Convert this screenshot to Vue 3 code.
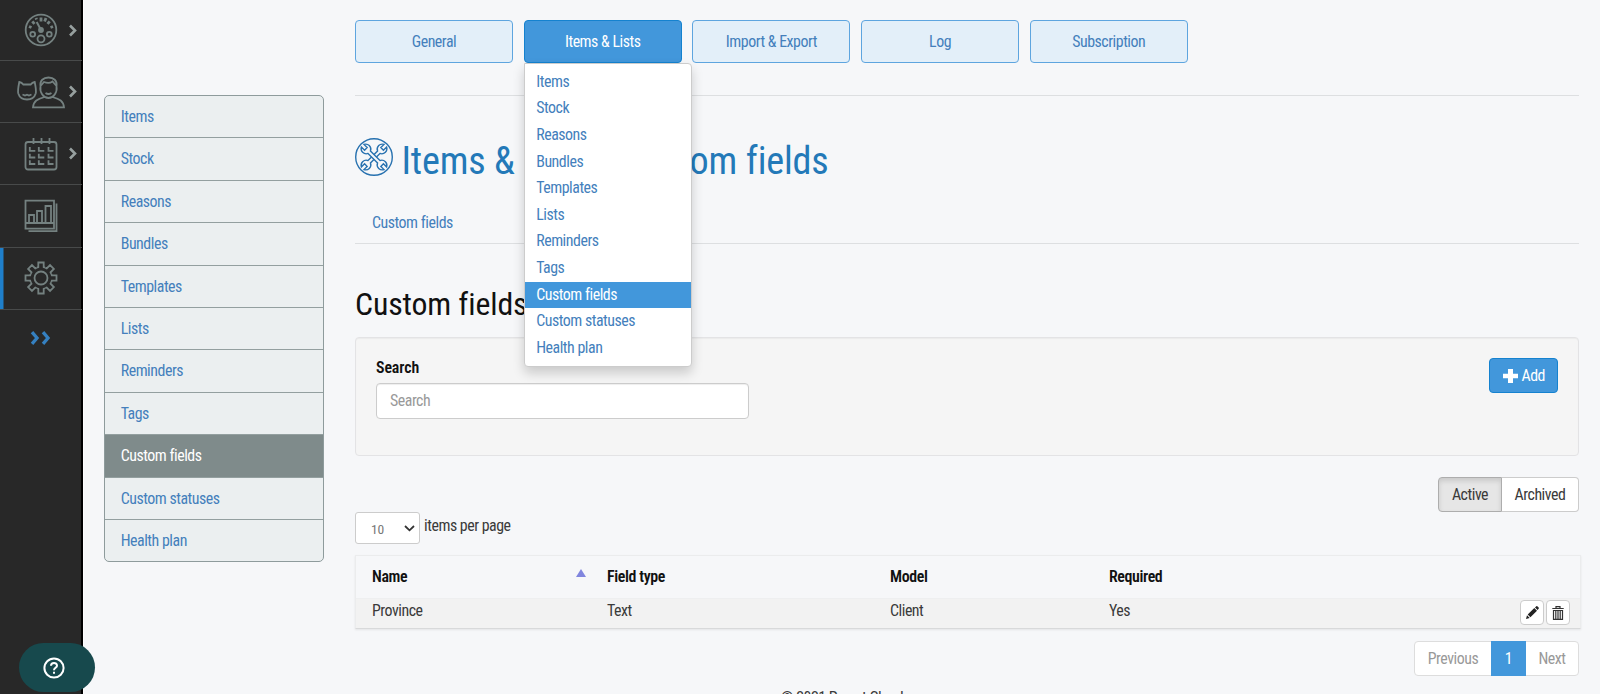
<script setup>
const sections = ['Items', 'Stock', 'Reasons', 'Bundles', 'Templates', 'Lists', 'Reminders', 'Tags', 'Custom fields', 'Custom statuses', 'Health plan']
const tabs = ['General', 'Items & Lists', 'Import & Export', 'Log', 'Subscription']
const current = 'Custom fields'
const teeth = [0, 45, 90, 135, 180, 225, 270, 315]
</script>

<template>
  <div class="page">
    <nav class="rail">
      <a class="rail-item">
        <svg class="ico" width="34" height="34" viewBox="0 0 34 34">
          <circle cx="17" cy="17" r="15.300" />
          <circle cx="17" cy="25.800" r="3.500" /><circle cx="8.700" cy="21.300" r="2.400" /><circle cx="25.300" cy="21.300" r="2.400" />
          <path d="M17 17l-4.300-8" stroke-width="2" /><circle cx="17" cy="17" r="2" class="solid" />
          <path d="M17 4.500v4M22 5l-1.400 3.600M12 5l.5 1.500M8.300 8.300l2.200 2.600M25.700 8.300l-2.200 2.600M5 13.500l2.500 1M29 13.500l-2.500 1" stroke-width="2.800" />
        </svg>
        <svg class="chev" width="8" height="13" viewBox="0 0 8 13"><path d="M1 1.500l5 5-5 5" /></svg>
      </a>
      <a class="rail-item">
        <svg class="ico people" width="50" height="34" viewBox="0 0 50 34">
          <path d="M3.300 7q2.500.3 4 2.500h7.400q1.500-2.200 4-2.500c.8 4 1.800 8.500 1 11.500-1.200 4-4.200 6-8.700 6s-7.500-2-8.700-6c-.8-3 .2-7.500 1-11.500zM6.500 19.500l2.500 1 2-.8 2 .8 2.500-1" />
          <path d="M24.500 11.500c-1-6 3-9 8-9s9 3 8 9c1 6-3 11.500-8 11.500s-9-5.500-8-11.500zM24.500 11l3.500-4q5 2 8.500-.5l4 4.500M29.500 18q3 2 6 0M28.500 22c-7 2-11 4-11.500 10.300h31c-.5-6.300-4.500-8.300-11.500-10.300" />
        </svg>
        <svg class="chev" width="8" height="13" viewBox="0 0 8 13"><path d="M1 1.500l5 5-5 5" /></svg>
      </a>
      <a class="rail-item">
        <svg class="ico" width="34" height="34" viewBox="0 0 34 34">
          <rect x="1.500" y="5" width="31" height="27.500" rx="2.500" />
          <path d="M9.500 1v6M17.500 1v6M25.500 1v6M5.800 10v3.800h5.500M14.800 10v3.800h5.500M24.500 10v3.800h5M5.800 16.700v3.800h5.500M14.800 16.700v3.800h5.500M24.500 16.700v3.800h5M5.800 23.200v3.800h5.500M14.800 23.200v3.800h5.500M24.500 23.200v3.800h5" />
        </svg>
        <svg class="chev" width="8" height="13" viewBox="0 0 8 13"><path d="M1 1.500l5 5-5 5" /></svg>
      </a>
      <a class="rail-item">
        <svg class="ico" width="34" height="34" viewBox="0 0 34 34">
          <path d="M1.500 1.700h28.500v28H1.500zM1.500 24h28.500M4.500 32.200h28V4.500M5 24v-8h5v8M13 24V12h5v12M21.500 24V7h5.500v17" />
        </svg>
      </a>
      <a class="rail-item active">
        <svg class="ico" width="34" height="34" viewBox="0 0 34 34">
          <circle cx="17" cy="17" r="6.500" />
          <path v-for="a in teeth" :key="a" :transform="`rotate(${a} 17 17)`" d="M12.900 6.800q.6-.3 1.400-.6V1.500h5.400v4.700q.8.3 1.400.6" />
        </svg>
      </a>
      <a class="expand">
        <svg width="21" height="14" viewBox="0 0 21 14"><path d="M2 1.200l5 5.800-5 5.800M13 1.200l5 5.800-5 5.800" /></svg>
      </a>
    </nav>

    <aside class="side">
      <ul class="side-list">
        <li v-for="s in sections" :key="s" :class="{ on: s === current }">{{ s }}</li>
      </ul>
    </aside>

    <main class="content">
      <div class="tabs">
        <div v-for="(t, i) in tabs" :key="t" class="tab" :class="{ on: i === 1 }">
          {{ t }}
          <ul v-if="i === 1" class="menu">
            <li v-for="s in sections" :key="s" :class="{ on: s === current }">{{ s }}</li>
          </ul>
        </div>
      </div>

      <h1 class="title">
        <svg width="38" height="38" viewBox="0 0 38 38">
          <circle cx="19" cy="19" r="18.300" />
          <g v-for="a in [45, 135]" :key="a" :transform="`rotate(${a} 19 19)`">
            <path class="wrench" d="M17.300 12.300Q14.300 11 14.300 7.600 14.300 4.500 17.200 3v4.500h3.600V3q2.900 1.500 2.900 4.600 0 3.400-3 4.700v13.400q3 1.300 3 4.700 0 3.100-2.900 4.600v-4.500h-3.600V35q-2.900-1.500-2.900-4.600 0-3.400 3-4.700z" />
          </g>
        </svg>
        <span>Items &amp; Lists - Custom fields</span>
      </h1>
      <div class="subtabs">Custom fields</div>
      <h2 class="heading">Custom fields</h2>

      <section class="well">
        <div class="search">
          <label>Search</label>
          <div class="field">Search</div>
        </div>
        <button class="add">
          <svg width="15" height="14" viewBox="0 0 15 14"><path d="M5 0h5v4.700h5v4.600h-5V14H5V9.300H0V4.700h5z" /></svg>
          Add
        </button>
      </section>

      <div class="switch-row"><div class="switch"><span class="pressed">Active</span><span>Archived</span></div></div>

      <div class="per-page">
        <div class="select">10<svg width="11" height="7" viewBox="0 0 11 7"><path d="M1 1l4.500 4.300L10 1" /></svg></div>
        <span>items per page</span>
      </div>

      <div class="table">
        <div class="row head"><span>Name<i class="sort"></i></span><span>Field type</span><span>Model</span><span>Required</span><span></span></div>
        <div class="row body">
          <span>Province</span><span>Text</span><span>Client</span><span>Yes</span>
          <span class="tools">
            <b><svg width="13" height="13" viewBox="0 0 13 13"><path d="M0 13l1-3.700 2.700 2.700zM1.700 8.600l6.600-6.500 2.700 2.700-6.600 6.500zM9 1.400L10.300.2q.7-.4 1.300.2l1 1q.6.600 0 1.300L11.600 4z" /></svg></b>
            <b><svg width="12" height="14" viewBox="0 0 12 14"><path d="M.3 2.500h11.400M4 2V.7h4V2" class="ln" /><path d="M1.500 4.500h9v8.800h-9zM3.800 5v8M6 5v8M8.200 5v8" class="ln" /></svg></b>
          </span>
        </div>
      </div>

      <div class="pager"><div class="pages"><span>Previous</span><span class="cur">1</span><span>Next</span></div></div>
      <footer class="foot">© 2021 Provet Cloud</footer>
    </main>

    <button class="help">
      <svg width="22" height="22" viewBox="0 0 22 22"><circle cx="11" cy="11" r="9.600" /><path d="M8 8.800C8 5 14 5 14 8.700c0 2-3 2.300-3 4.500" /><path d="M11 14.800v2" /></svg>
    </button>
  </div>
</template>

<style>
body { overflow: hidden; background: #f6f7f9; }
</style>

<style scoped>
* { box-sizing: border-box; }
ul { list-style: none; margin: 0; padding: 0; }
.page {
  position: relative; display: flex; width: 1600px; height: 694px; overflow: hidden; background: #f6f7f9;
  font-family: "Roboto Condensed", Roboto, sans-serif; font-stretch: 75%; font-size: 15.900px; font-weight: 390; letter-spacing: -.47px; color: #3a3a3a;
}
.rail { width: 84px; height: 694px; flex: none; background: #282828; border-right: 1px solid #fdfdfd; box-shadow: inset -2px 0 0 #000; }
.rail-item { position: relative; display: flex; align-items: center; height: 62.200px; border-bottom: 1px solid #484a4a; width: 82px; padding-left: 23.500px; }
.rail-item:first-child { height: 61px; padding-bottom: 1px; }
.rail-item.active { box-shadow: inset 3.500px 0 0 #1f7fca; }
.ico { fill: none; stroke: #748180; stroke-width: 1.800; flex: none; }
.ico .solid { fill: #74807f; }
.people { margin-left: -7.500px; }
.chev { position: absolute; left: 68.500px; top: 24px; fill: none; stroke: #97a09f; stroke-width: 2.600; }
.expand { display: flex; padding: 21px 0 0 30px; }
.expand svg { fill: none; stroke: #3580c0; stroke-width: 3.300; }

.side { width: 271px; flex: none; padding: 95px 0 0 20px; }
.side-list { width: 220px; border: 1px solid #8e9b9c; border-radius: 5px; overflow: hidden; background: #ebeff0; }
.side-list li { height: 42.400px; line-height: 41px; padding-left: 15.700px; color: #447fbc; border-bottom: 1px solid #939f9f; }
.side-list li:last-child { border-bottom: 0; height: 41.500px; }
.side-list li.on { background: #7f8b8b; color: #fff; font-weight: 400; }

.content { width: 1224px; flex: none; }
.tabs { display: flex; gap: 10.700px; padding-top: 20px; height: 96px; border-bottom: 1px solid #dddfe1; }
.tab { position: relative; width: 158px; height: 43px; line-height: 41px; text-align: center; color: #447fbc; background: #e3eff9; border: 1px solid #5ea5df; border-radius: 4px; }
.tab.on { background: #4297db; border-color: #1582cf; color: #fff; font-weight: 420; }
.menu { position: absolute; z-index: 3; left: -1px; top: 42px; width: 168.500px; height: 304px; padding: 4.800px 0; text-align: left; font-weight: 390; background: #fff; border: 1px solid #ccc; border-radius: 0 4px 4px 4px; box-shadow: 0 6px 12px rgba(0,0,0,.18); }
.menu li { height: 26.600px; line-height: 26.600px; padding-left: 11.500px; color: #447fbc; }
.menu li.on { background: #4297db; color: #fff; font-weight: 420; }

.title { display: flex; align-items: flex-start; height: 105px; margin: 0; padding-top: 42px; font-weight: 400; font-size: 38.200px; letter-spacing: -.18px; line-height: 47px; color: #2379b8; }
.title svg { flex: none; margin-right: 8.500px; fill: none; stroke: #2872b0; stroke-width: 1.400; }
.wrench { fill: #f6f7f9; }
.title span { white-space: nowrap; }
.subtabs { height: 43px; padding-left: 17px; line-height: 43px; color: #447fbc; border-bottom: 1px solid #dddfe1; }
.heading { margin: 0; height: 93px; padding-top: 39px; font-weight: 400; font-size: 31.800px; letter-spacing: -.12px; line-height: 43px; color: #111; }
.well { display: flex; justify-content: space-between; align-items: flex-start; height: 119px; padding: 20px; background: #f5f5f5; border: 1px solid #e3e3e5; border-radius: 4px; box-shadow: inset 0 1px 1px rgba(0,0,0,.04); }
.search { width: 373px; }
.search label { display: block; height: 25px; line-height: 19px; font-weight: 600; letter-spacing: -.1px; color: #111; }
.field { height: 36px; padding-left: 13px; line-height: 34px; color: #999; background: #fff; border: 1px solid #ccc; border-radius: 4px; box-shadow: inset 0 1px 1px rgba(0,0,0,.07); }
button { font: inherit; font-stretch: 75%; letter-spacing: inherit; }
.add { display: flex; align-items: center; gap: 3.500px; width: 69px; height: 35px; padding: 0 13px; border: 1px solid #1582cf; border-radius: 4px; background: #4297db; color: #fff; font-weight: 400; white-space: nowrap; }
.add svg { flex: none; fill: #fff; }
.switch-row { display: flex; justify-content: flex-end; padding-top: 21px; height: 56px; }
.switch { display: flex; height: 35px; line-height: 33px; text-align: center; }
.switch span { width: 77px; background: #fff; border: 1px solid #ccc; border-left: 0; border-radius: 0 4px 4px 0; }
.switch .pressed { width: 64px; background: #e6e6e6; border: 1px solid #adadad; border-radius: 4px 0 0 4px; box-shadow: inset 0 3px 5px rgba(0,0,0,.125); }
.per-page { display: flex; height: 43px; gap: 4px; line-height: 28px; }
.select { display: flex; align-items: center; justify-content: space-between; width: 65px; height: 32px; padding: 1px 4px 0 15px; font-size: 13.600px; letter-spacing: -.2px; color: #777; background: #fff; border: 1px solid #ccc; border-radius: 3px; }
.select svg { fill: none; stroke: #333; stroke-width: 1.800; }
.table { width: 1226px; height: 74px; border: 1px solid #ebeced; border-bottom-color: #d8d9da; box-shadow: 0 1px 2px rgba(0,0,0,.08); }
.row { display: grid; grid-template-columns: 235px 283px 219px 1fr 60px; padding-left: 16px; }
.head { height: 43px; line-height: 42px; font-weight: 620; color: #111; letter-spacing: -.38px; border-bottom: 1px solid #eeeff0; }
.head span { position: relative; }
.sort { position: absolute; left: 204px; top: 13px; border: 5px solid transparent; border-top: 0; border-bottom: 8px solid #8085de; }
.body { height: 29px; line-height: 23px; background: #f2f2f2; }
.tools { display: flex; gap: 2px; padding: 1px 0 0 0; }
.tools b { display: flex; align-items: center; justify-content: center; width: 24px; height: 25px; background: #fff; border: 1px solid #ccc; border-radius: 4px; }
.tools svg { fill: #222; }
.tools .ln { fill: none; stroke: #333; stroke-width: 1.200; }
.pager { display: flex; justify-content: flex-end; padding-top: 12px; height: 60px; }
.pages { display: flex; width: 165px; height: 35px; line-height: 33px; text-align: center; color: #999; background: #fff; border: 1px solid #ddd; border-radius: 4px; }
.pages span:first-child { width: 76px; }
.pages span:last-child { flex: 1; }
.pages .cur { width: 35px; height: 35px; margin-top: -1px; line-height: 35px; color: #fff; background: #4297db; }
.foot { margin-top: -1px; padding-left: 426px; line-height: 19px; white-space: nowrap; }
.help { position: absolute; z-index: 5; left: 19px; top: 643px; width: 76px; height: 49px; display: flex; align-items: center; padding: 0 0 0 23.500px; border: 0; border-radius: 25px; background: #17494d; }
.help svg { fill: none; stroke: #fff; stroke-width: 2; }
</style>
